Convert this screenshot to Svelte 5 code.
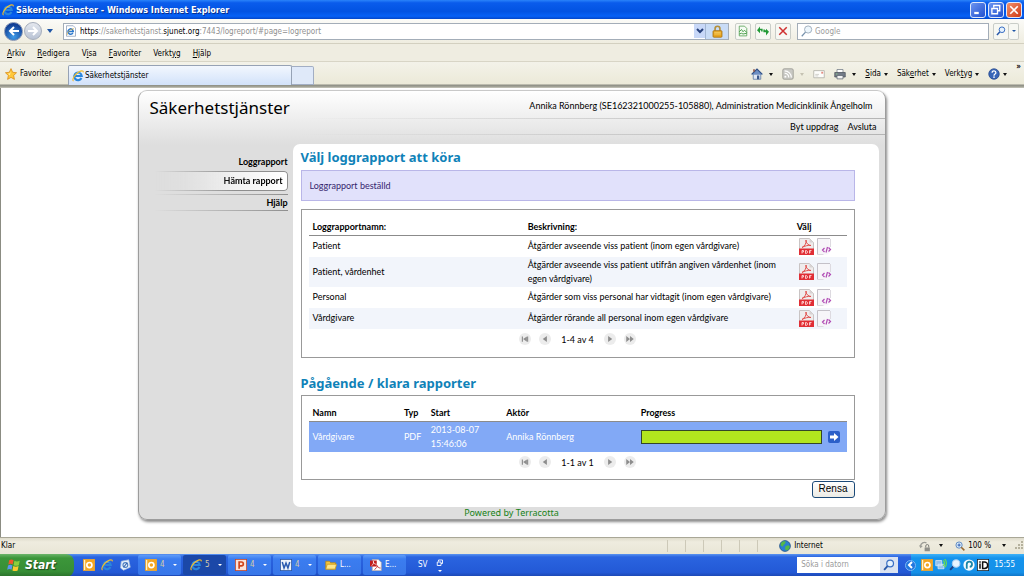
<script lang="ts">
  type Key = [before: string, key: string, after: string];

  const menus: Key[] = [
    ['', 'A', 'rkiv'],
    ['', 'R', 'edigera'],
    ['V', 'i', 'sa'],
    ['', 'F', 'avoriter'],
    ['Verkt', 'y', 'g'],
    ['', 'Hj', 'älp'],
  ];

  const commands: Key[] = [
    ['', 'S', 'ida'],
    ['Säk', 'e', 'rhet'],
    ['Verk', 't', 'yg'],
  ];

  const reports = [
    { name: 'Patient', description: 'Åtgärder avseende viss patient (inom egen vårdgivare)' },
    { name: 'Patient, vårdenhet', description: 'Åtgärder avseende viss patient utifrån angiven vårdenhet (inom egen vårdgivare)' },
    { name: 'Personal', description: 'Åtgärder som viss personal har vidtagit (inom egen vårdgivare)' },
    { name: 'Vårdgivare', description: 'Åtgärder rörande all personal inom egen vårdgivare' },
  ];

  const jobs = [
    { name: 'Vårdgivare', type: 'PDF', start: '2013-08-07 15:46:06', actor: 'Annika Rönnberg', progress: 100 },
  ];

  const tasks = [
    { icon: 'outlook', text: '4', group: true },
    { icon: 'ie', text: '5', group: true, active: true },
    { icon: 'powerpoint', text: '4', group: true },
    { icon: 'word', text: '4', group: true },
    { icon: 'folder', text: 'L...', group: false },
    { icon: 'acrobat', text: 'E...', group: false },
  ];

  let search = $state('');
  let desktopSearch = $state('');
</script>

{#snippet icon(name: string, size = 12)}
  <svg class="icon" width={size} height={size} viewBox="0 0 16 16" aria-hidden="true">
    {#if name === 'ie'}
      <path d="M12.6 10.6A5 5 0 1 1 13 8H4" fill="none" stroke="#2a86dc" stroke-width="2.8" />
      <path d="M4.5 6.2A4 4 0 0 1 10 4" fill="none" stroke="#9fd8ff" stroke-width="1" />
      <path d="M2 14.8C-.6 13 4 5.500 9 2.600C12 .8 15.400 .2 15 3.200" fill="none" stroke="#f2bd2c" stroke-width="1.500" />
    {:else if name === 'page'}
      <path d="M2 1h9l3 3v11H2z" fill="#fff" stroke="#8a9bb5" />
      <path d="M10.500 10.500A3.500 3.500 0 1 1 11 8.500H5" fill="none" stroke="#2c78cc" stroke-width="2" />
      <path d="M3 13C3 9 8 5 12 5" fill="none" stroke="#e3b33a" />
    {:else if name === 'star'}
      <path d="M8 .8l2.200 4.900 5.200.6-3.900 3.600 1.100 5.300L8 12.500l-4.600 2.700 1.100-5.300L.6 6.300l5.200-.6z" fill="#ffc83a" stroke="#d98a14" />
      <path d="M8 3.500L6.600 7 4 7.500l2.500 2z" fill="#fff0b0" />
    {:else if name === 'lock'}
      <path d="M5 7V4.500a3 3 0 0 1 6 0V7" fill="none" stroke="#b4903a" stroke-width="2" />
      <rect x="2.500" y="7" width="11" height="8" rx="1" fill="#e8a520" stroke="#a8700c" />
      <path d="M4 9h8M4 11h8" stroke="#f9d370" />
    {:else if name === 'compat'}
      <path d="M3 1.500h7l3 3v10H3z" fill="#f4fbf2" stroke="#4a9a4a" />
      <path d="M3 9l3-3 2 3 2-2 3 3M3 12l3-1 2 1 5-1" fill="none" stroke="#3c9840" stroke-width="1.200" />
    {:else if name === 'refresh'}
      <path d="M0 7l4-5v3h3.500v3.500h-2V7H4v4z" fill="#219a35" />
      <path d="M16 9l-4-4v2h-1.500V6h-2v3.500H12v4.500z" fill="#219a35" />
    {:else if name === 'stop'}
      <path d="M3 3l10 10M13 3L3 13" stroke="#cf3030" stroke-width="2" />
    {:else if name === 'magnifier'}
      <circle cx="9.500" cy="6" r="4.500" fill="#e6f2fd" stroke="#3a6fc4" stroke-width="1.600" />
      <path d="M6 9.500L1.500 14.500" stroke="#2757a8" stroke-width="2.400" />
    {:else if name === 'glass'}
      <circle cx="9.500" cy="6" r="4.800" fill="#edf6fc" stroke="#9aa9b8" stroke-width="1.200" />
      <path d="M6 9.500L1 15" stroke="#7590ab" stroke-width="1.600" />
    {:else if name === 'home'}
      <path d="M3 8h10v7H3z" fill="#dfe8f5" stroke="#54719c" />
      <path d="M.8 8.500L8 1.500l7.200 7" fill="#6d8fc4" stroke="#2f4f86" stroke-width="1.600" />
      <path d="M3 1.500h2V5H3z" fill="#8b4a3a" />
      <path d="M8 10h3v5H8z" fill="#39588c" />
    {:else if name === 'feed'}
      <rect x="1" y="1" width="14" height="14" rx="2" fill="#c9c9c4" stroke="#96968f" />
      <circle cx="4.500" cy="11.500" r="1.300" fill="#fff" />
      <path d="M3.500 7a5.500 5.500 0 0 1 5.500 5.500M3.500 3.800a9 9 0 0 1 9 9" fill="none" stroke="#fff" stroke-width="1.500" />
    {:else if name === 'mail'}
      <path d="M1 3.500h14v9.500H1z" fill="#fdfdfb" stroke="#aaa9a2" />
      <path d="M11 5h2.500v2.500H11z" fill="#e48c82" />
      <path d="M3 8.500h5M3 10.500h4" stroke="#c4c4be" />
    {:else if name === 'printer'}
      <path d="M4 2h8v5H4z" fill="#fff" stroke="#737b86" />
      <path d="M1 6h14v6H1z" fill="#747c88" stroke="#4e545e" />
      <path d="M4 10h8v4.500H4z" fill="#f4f4f4" stroke="#5d6570" />
      <path d="M2.500 8h2" stroke="#8fe08f" />
    {:else if name === 'help'}
      <circle cx="8" cy="8" r="7" fill="#3866b8" stroke="#24468a" />
      <path d="M5.500 6.200c0-3.400 5-3.200 5 0 0 2-2.500 1.800-2.500 4" fill="none" stroke="#fff" stroke-width="1.700" />
      <circle cx="8" cy="12.200" r="1.100" fill="#fff" />
    {:else if name === 'globe'}
      <circle cx="8" cy="8" r="7.200" fill="#2b7fd0" stroke="#1a4c86" />
      <path d="M3 3.500c2-2 5-2 6-1.500L8 5 6 6.500 5 9 2 7zM9 8l4-1 1.500 2-2 4L9 14l-1-3z" fill="#54b848" />
    {:else if name === 'protected'}
      <path d="M2 9c0-5 5-7 8-5" fill="none" stroke="#9d9d96" stroke-width="1.800" />
      <path d="M0 7l2 4 3-3z" fill="#9d9d96" />
      <path d="M9 10V8a2 2 0 0 1 4 0v2" fill="none" stroke="#7b7b76" stroke-width="1.300" />
      <rect x="7.500" y="10" width="7" height="5" fill="#8e8e88" />
    {:else if name === 'zoomin'}
      <circle cx="6.500" cy="6.500" r="5" fill="#dcecfb" stroke="#5b86bf" stroke-width="1.500" />
      <path d="M10 10l5 5" stroke="#9a6a32" stroke-width="2.500" />
      <path d="M6.500 4v5M4 6.500h5" stroke="#2458b0" stroke-width="1.500" />
    {:else if name === 'outlook'}
      <rect x=".5" y=".5" width="15" height="15" fill="#fff2c8" stroke="#e89a1c" />
      <path d="M3 1h12v14H3z" fill="#f4a620" />
      <circle cx="8.500" cy="8" r="3.400" fill="none" stroke="#fff" stroke-width="2.200" />
    {:else if name === 'desktop'}
      <path d="M3 3l10-2 2 10-9 4-4-3z" fill="#e8f1fb" stroke="#9db9dc" />
      <circle cx="8.500" cy="8" r="3.200" fill="none" stroke="#4b7fc4" stroke-width="1.500" />
      <path d="M6 11l5-6" stroke="#2d5fa8" stroke-width="1.500" />
    {:else if name === 'powerpoint'}
      <rect x=".5" y=".5" width="15" height="15" fill="#fbe3da" stroke="#c9431e" />
      <path d="M5.500 13V4h3a2.500 2.500 0 0 1 0 5.200h-3" fill="none" stroke="#d2431a" stroke-width="2.200" />
    {:else if name === 'word'}
      <rect x=".5" y=".5" width="15" height="15" fill="#eef4fc" stroke="#2a5298" />
      <path d="M3 4l2.400 8L8 5.500 10.600 12 13 4" fill="none" stroke="#2a5bb0" stroke-width="2" />
    {:else if name === 'folder'}
      <path d="M1 3h5l1.500 2H14v8.500H1z" fill="#f3c33c" stroke="#b98512" />
      <path d="M3 7h12.500L13.500 13.500H1z" fill="#fde58a" stroke="#c8961c" />
    {:else if name === 'acrobat'}
      <path d="M3 .5h8l4 4v11H3z" fill="#fff" stroke="#b3a5a5" />
      <path d="M0 2h9v8H0z" fill="#c21d1d" />
      <path d="M2 9c3-2 3-5 2.500-6 0 3 2 4 4 4" fill="none" stroke="#fff" />
      <path d="M6 14c3-2 4-4 4-5 0 2 2 3 4 3" fill="none" stroke="#c21d1d" stroke-width="1.200" />
    {:else if name === 'network'}
      <path d="M1 2h8v7H1zM4 7h8v6H4z" fill="#8fc0ee" stroke="#dbe9f7" />
      <path d="M11 2c2 2 2 5 0 7M13 0c3 3 3 8 0 11" fill="none" stroke="#6be04a" stroke-width="1.500" />
    {:else if name === 'lens'}
      <path d="M6 9.500L1.500 14.500" stroke="#1d3f86" stroke-width="2.600" />
      <circle cx="9.500" cy="6" r="5" fill="#e8f4ff" stroke="#a9cdf2" stroke-width="1.600" />
    {:else if name === 'swirl'}
      <circle cx="8" cy="8" r="7.500" fill="#f6fbff" />
      <path d="M5 13V7a3.500 3.500 0 1 1 4 3.500" fill="none" stroke="#1c86a8" stroke-width="2.400" />
    {:else if name === 'id'}
      <rect x=".5" y=".5" width="15" height="15" fill="#fff" stroke="#222" />
      <path d="M4 6v7M7.500 4H10a4 4 0 0 1 0 8.500H7.500z" fill="none" stroke="#111" stroke-width="2" />
      <path d="M3 3h2v2H3z" fill="#111" />
    {:else if name === 'restore'}
      <path d="M5 5V2h8v7h-3" fill="none" stroke="#fff" stroke-width="1.800" />
      <path d="M2.500 6h7.500v7H2.500z" fill="none" stroke="#fff" stroke-width="1.800" />
    {:else if name === 'minimize'}
      <path d="M3 12h6" stroke="#fff" stroke-width="3" />
    {:else if name === 'close'}
      <path d="M3 3l10 10M13 3L3 13" stroke="#fff" stroke-width="2.200" />
    {:else if name === 'first'}
      <path d="M4.500 4.500v7M11.500 4.500v7" stroke="#8d8d8d" stroke-width="1.500" />
      <path d="M10.500 4.500v7L5.500 8z" fill="#8d8d8d" />
    {:else if name === 'prev'}
      <path d="M10.500 4v8L5 8z" fill="#8d8d8d" />
    {:else if name === 'next'}
      <path d="M5.500 4v8L11 8z" fill="#8d8d8d" />
    {:else if name === 'last'}
      <path d="M3 4v8l5-4zM8 4v8l5-4z" fill="#8d8d8d" />
    {/if}
  </svg>
{/snippet}

{#snippet key([before, mnemonic, after]: Key)}{before}<u>{mnemonic}</u>{after}{/snippet}

{#snippet pager(label: string)}
  <div class="pager">
    <button aria-label="Första">{@render icon('first')}</button>
    <button aria-label="Föregående">{@render icon('prev')}</button>
    <span>{label}</span>
    <button aria-label="Nästa">{@render icon('next')}</button>
    <button aria-label="Sista">{@render icon('last')}</button>
  </div>
{/snippet}

<div class="window">
  <header class="titlebar">
    {@render icon('ie')}
    <span class="title">Säkerhetstjänster - Windows Internet Explorer</span>
    <div class="caption">
      <button aria-label="Minimera">{@render icon('minimize')}</button>
      <button aria-label="Återställ">{@render icon('restore')}</button>
      <button class="close" aria-label="Stäng">{@render icon('close')}</button>
    </div>
  </header>

  <div class="navbar">
    <div class="travel">
      <button class="back" aria-label="Bakåt">
        <svg class="icon" width="12" height="12" viewBox="0 0 12 12"><path d="M11 6H2M6 2L2 6l4 4" fill="none" stroke="#fff" stroke-width="2" /></svg>
      </button>
      <button class="forward" aria-label="Framåt">
        <svg class="icon" width="12" height="12" viewBox="0 0 12 12"><path d="M1 6h9M6 2l4 4-4 4" fill="none" stroke="#fff" stroke-width="2" /></svg>
      </button>
      <button class="recent" aria-label="Senaste sidor"><i class="caret navy"></i></button>
    </div>
    <div class="address">
      {@render icon('page')}
      <div class="url" role="textbox" tabindex="0" aria-label="Adress" contenteditable="true"><b>https</b>://sakerhetstjanst.<strong>sjunet.org</strong>:7443/logreport/#page=logreport</div>
      <button class="drop" aria-label="Visa adresser">
        <svg class="icon" width="8" height="8" viewBox="0 0 8 8"><path d="M1 2l3 3 3-3" fill="none" stroke="#28427c" stroke-width="2" /></svg>
      </button>
      <button class="secure" aria-label="Säkerhetsrapport">{@render icon('lock', 13)}</button>
    </div>
    <div class="tools">
      <button aria-label="Kompatibilitetsvy">{@render icon('compat')}</button>
      <button aria-label="Uppdatera">{@render icon('refresh')}</button>
      <button aria-label="Stoppa">{@render icon('stop')}</button>
    </div>
    <label class="search">
      {@render icon('glass')}
      <input type="text" placeholder="Google" aria-label="Sök" bind:value={search} />
    </label>
    <div class="go">
      <button aria-label="Sök">{@render icon('magnifier', 10)}</button>
      <button class="narrow" aria-label="Sökalternativ"><i class="caret small navy"></i></button>
    </div>
  </div>

  <nav class="menubar">
    {#each menus as menu}
      <button>{@render key(menu)}</button>
    {/each}
  </nav>

  <div class="tabrow">
    <button class="favorites">{@render icon('star')}Favoriter</button>
    <button class="tab">{@render icon('ie')}Säkerhetstjänster</button>
    <button class="newtab" aria-label="Ny flik"></button>
    <div class="commandbar">
      <button aria-label="Startsida">{@render icon('home')}<i class="caret"></i></button>
      <button aria-label="Feeds">{@render icon('feed')}<i class="caret pale"></i></button>
      <button aria-label="Läs e-post">{@render icon('mail')}</button>
      <button aria-label="Skriv ut">{@render icon('printer')}<i class="caret"></i></button>
      {#each commands as command}
        <button class="word"><span>{@render key(command)}</span><i class="caret"></i></button>
      {/each}
      <button class="word" aria-label="Hjälp">{@render icon('help')}<i class="caret"></i></button>
      <button class="more" aria-label="Mer">»</button>
    </div>
  </div>

  <main class="viewport">
    <div class="card">
      <div class="masthead">
        <h1>Säkerhetstjänster</h1>
        <div class="user">
          <p>Annika Rönnberg (SE162321000255-105880), Administration Medicinklinik Ångelholm</p>
          <div class="session">
            <a href="#uppdrag">Byt uppdrag</a>
            <a href="#avsluta">Avsluta</a>
          </div>
        </div>
      </div>

      <div class="body">
        <nav class="sidenav">
          <a href="#loggrapport">Loggrapport</a>
          <a class="current" href="#hamta">Hämta rapport</a>
          <a class="ruled" href="#hjalp">Hjälp</a>
        </nav>

        <section class="panel">
          <h2>Välj loggrapport att köra</h2>
          <div class="message" role="status">Loggrapport beställd</div>

          <div class="box">
            <table>
              <colgroup><col style="width:40%" /><col style="width:50%" /><col style="width:10%" /></colgroup>
              <thead>
                <tr><th>Loggrapportnamn:</th><th>Beskrivning:</th><th>Välj</th></tr>
              </thead>
              <tbody>
                {#each reports as report}
                  <tr>
                    <td>{report.name}</td>
                    <td>{report.description}</td>
                    <td>
                      <div class="formats">
                        <button aria-label="{report.name} som PDF">
                          <svg class="icon" width="15" height="17" viewBox="0 0 15 17">
                            <path d="M.5.5h10l4 4v12H.5z" fill="#efecec" stroke="#c9c4c4" />
                            <path d="M10.500.5v4h4z" fill="#d8d3d3" />
                            <path d="M3 9.500C6 8 7.500 5 7 2c-.3 3 2.500 5.500 5 5.500C9 7 5.500 8 3 9.500z" fill="none" stroke="#e2504c" />
                            <path d="M0 10.500h15V17H0z" fill="#e02e35" />
                            <path d="M3 15.500v-3h1.500v1.500H3M6.500 12.500v3h.8c1.500 0 1.500-3 0-3zM10.500 15.500v-3h2M10.500 14h1.500" fill="none" stroke="#ffd9d9" stroke-width=".9" />
                          </svg>
                        </button>
                        <button aria-label="{report.name} som XML">
                          <svg class="icon" width="15" height="17" viewBox="0 0 15 17">
                            <path d="M.5.5h12v5l1 8-3 3H.5z" fill="#f7f6f9" />
                            <path d="M.5 16.500V.5h12.500" fill="none" stroke="#c4c1c8" />
                            <path d="M.5 16.500h6M13.500 1v8" fill="none" stroke="#dddae0" />
                            <path d="M7.500 10L5.500 12l2 2M11.500 9.500l2 2-2 2M10.500 9L9 14.500" fill="none" stroke="#b04ab4" stroke-width="1.200" />
                          </svg>
                        </button>
                      </div>
                    </td>
                  </tr>
                {/each}
              </tbody>
            </table>
            {@render pager('1-4 av 4')}
          </div>

          <h2 class="second">Pågående / klara rapporter</h2>
          <div class="box short">
            <table class="jobs">
              <colgroup>
                <col style="width:17%" /><col style="width:5%" /><col style="width:14%" /><col style="width:25%" /><col style="width:39%" />
              </colgroup>
              <thead>
                <tr><th>Namn</th><th>Typ</th><th>Start</th><th>Aktör</th><th>Progress</th></tr>
              </thead>
              <tbody>
                {#each jobs as job}
                  <tr>
                    <td>{job.name}</td>
                    <td>{job.type}</td>
                    <td class="start">{job.start}</td>
                    <td>{job.actor}</td>
                    <td>
                      <div class="progress">
                        <div class="bar" role="progressbar" aria-label="Progress" aria-valuenow={job.progress}>
                          <div class="fill" style="width:{job.progress}%"></div>
                        </div>
                        <button aria-label="Öppna rapport">
                          <svg class="icon" width="12" height="12" viewBox="0 0 12 12">
                            <rect width="12" height="12" rx="2" fill="#2b5fc9" />
                            <path d="M2 4.500h4V2l4.500 4L6 10V7.500H2z" fill="#fff" />
                          </svg>
                        </button>
                      </div>
                    </td>
                  </tr>
                {/each}
              </tbody>
            </table>
            {@render pager('1-1 av 1')}
          </div>
          <div class="actions"><button>Rensa</button></div>
        </section>
      </div>

      <footer><a href="#terracotta">Powered by Terracotta</a></footer>
    </div>
  </main>

  <div class="statusbar">
    <span class="status">Klar</span>
    <div class="cells">
      {#each Array(6) as _}<i></i>{/each}
    </div>
    <div class="zone">{@render icon('globe')}Internet</div>
    <button aria-label="Skyddat läge">{@render icon('protected')}<i class="caret"></i></button>
    <button class="zoom">{@render icon('zoomin', 10)}<span>100 %</span><i class="caret"></i></button>
    <svg class="icon" width="9" height="9" viewBox="0 0 9 9"><path d="M7 1h2M4 4h2M7 4h2M1 7h2M4 7h2M7 7h2" stroke="#b5b19d" stroke-width="2" /></svg>
  </div>

  <div class="taskbar">
    <button class="startbutton">
      <svg class="icon" width="14" height="14" viewBox="0 0 16 16" aria-hidden="true">
        <path d="M2.500 2.500c2-1 3.500-.8 5 .2L6.500 7.500c-1.500-1-3-1.200-5-.2z" fill="#f0582a" />
        <path d="M8.500 3.200c2 1 3.500 1 6 0l-1 5c-2 1-4 1-6 0z" fill="#8ccf3c" />
        <path d="M1.200 8.500c2-1 3.500-.8 5 .2l-1 4.800c-1.500-1-3-1.200-5-.2z" fill="#5b95f0" />
        <path d="M7.200 9.200c2 1 3.500 1 6 0l-1 5c-2 1-4 1-6 0z" fill="#fbc92f" />
      </svg>
      Start
    </button>
    <div class="quick">
      <button aria-label="Outlook">{@render icon('outlook')}</button>
      <button aria-label="Internet Explorer">{@render icon('ie')}</button>
      <button aria-label="Visa skrivbordet">{@render icon('desktop')}</button>
    </div>
    <div class="tasks">
      {#each tasks as task}
        <button class:active={task.active}>
          {@render icon(task.icon)}
          <span class:count={task.group}>{task.text}</span>
          {#if task.group}<i class="caret small white"></i>{/if}
        </button>
      {/each}
    </div>
    <span class="language">SV</span>
    <div class="langtools">
      {@render icon('restore', 8)}
      <i class="caret small white"></i>
    </div>
    <div class="desksearch">
      <input type="text" placeholder="Söka i datorn" aria-label="Söka i datorn" bind:value={desktopSearch} />
      <button aria-label="Sök i datorn">{@render icon('magnifier')}</button>
    </div>
    <div class="tray">
      <button class="expand" aria-label="Visa dolda ikoner">
        <svg class="icon" width="10" height="10" viewBox="0 0 10 10"><path d="M6 2L3 5l3 3" fill="none" stroke="#fff" stroke-width="2" /></svg>
      </button>
      {@render icon('outlook')}
      {@render icon('network')}
      {@render icon('lens')}
      {@render icon('swirl')}
      {@render icon('id')}
      <time>15:55</time>
    </div>
  </div>
</div>

<style>
  :global(body) { margin: 0; }

  .window {
    --page: Lato, sans-serif;
    --heading: "Noto Sans", sans-serif;
    display: flex; flex-direction: column;
    min-height: 100vh;
    background: #fff; color: #000;
    font: 8px/12px "DejaVu Sans Condensed", "DejaVu Sans", sans-serif;
  }
  .window * { box-sizing: border-box; }
  button, input { font: inherit; color: inherit; margin: 0; padding: 0; border: 0; background: none; }
  button { display: flex; align-items: center; cursor: pointer; white-space: nowrap; }
  a { color: inherit; text-decoration: none; }
  p, h1, h2 { margin: 0; }
  .icon { display: block; flex: none; }

  .caret {
    width: 0; height: 0; flex: none;
    border: 2px solid transparent; border-top: 3px solid #111; border-bottom: 0;
  }
  .caret.small { border-top-width: 2px; }
  .caret.pale { border-top-color: #c5c2b2; }
  .caret.white { border-top-color: #fff; }
  .caret.navy { border-top-color: #1f55a5; }

  /* browser chrome */
  .titlebar {
    display: flex; align-items: center; gap: 2px;
    height: 19px; padding: 0 2px;
    background: linear-gradient(#2a83fa, #0a5cec 15%, #0253e2 60%, #0661f6 85%, #0346c8);
    color: #fff;
  }
  .title { flex: 1; font: bold 9px/14px "DejaVu Sans Condensed", sans-serif; text-shadow: 1px 1px #0a2f8c; }
  .caption { display: flex; gap: 2px; }
  .caption button {
    justify-content: center; width: 16px; height: 16px;
    border: 1px solid #dfe8fb; border-radius: 3px;
    background: linear-gradient(135deg, #6c94f0, #2050d0);
  }
  .caption .close { background: linear-gradient(135deg, #f0906c, #d03a14); }

  .navbar {
    display: flex; align-items: center; gap: 4px;
    height: 25px; padding: 0 5px 0 4px;
    background: linear-gradient(#fbfbf8, #efede0);
    border-bottom: 1px solid #d3d0c0;
  }
  .travel { display: flex; align-items: center; gap: 1px; width: 55px; }
  .travel button { justify-content: center; border-radius: 50%; }
  .back { width: 19px; height: 19px; background: radial-gradient(circle at 50% 80%, #3f9be8, #123f95 75%); border: 1px solid #8393b3; }
  .forward { width: 18px; height: 18px; background: linear-gradient(#e3e7ee, #b9c3d4); border: 1px solid #a5adbb; }
  .recent { width: 14px; height: 16px; }
  .recent .caret { border-width: 4px 3px 0; }
  .address {
    display: flex; align-items: center; flex: 1; height: 17px; padding-left: 1px;
    background: #fff; border: 1px solid #a3adb8;
  }
  .url { flex: 1; padding: 2px 0 0 3px; color: #8f8f8f; outline: 0; white-space: nowrap; }
  .url b, .url strong { font-weight: normal; color: #000; }
  .drop { justify-content: center; width: 11px; height: 14px; background: #c8d8f8; }
  .secure { justify-content: center; width: 23px; height: 15px; background: #c9dcf6; border-left: 1px solid #a3b7d3; }
  .tools { display: flex; gap: 4px; padding-left: 2px; }
  .tools button, .go button {
    justify-content: center; width: 16px; height: 17px;
    border: 1px solid #c9cdc8; border-radius: 2px; background: #f7f8f3;
  }
  .search {
    display: flex; align-items: center; gap: 2px; width: 192px; height: 17px; margin-left: 2px; padding-left: 3px;
    background: #fff; border: 1px solid #a3adb8;
  }
  .search input { flex: 1; min-width: 0; padding-top: 2px; outline: 0; }
  input::placeholder { color: #9b9b9b; opacity: 1; }
  .go { display: flex; }
  .go .narrow { width: 10px; border-left: 0; }

  .menubar {
    display: flex; gap: 12px; height: 18px; padding: 2px 0 0 7px;
    background: #efede1; border-bottom: 1px solid #d8d5c6;
  }

  .tabrow {
    display: flex; align-items: flex-end;
    height: 26px; padding: 0 3px 3px 5px;
    background: linear-gradient(#f3f2e9, #ecead9 21px, #ecead9 22px, #8b8c82 23px, #a8a89c 25px, #d0cfc4);
  }
  .favorites { gap: 3px; width: 63px; height: 22px; }
  .tab {
    gap: 1px; width: 224px; height: 20px; padding-left: 3px;
    border: 1px solid #96a2b5; border-bottom: 0; border-radius: 2px 2px 0 0;
    background: linear-gradient(#f2f7fe, #d2e2fa);
  }
  .newtab { width: 22px; height: 19px; border: 1px solid #a2aec4; border-left: 0; border-radius: 0 2px 0 0; background: #dfe9f9; }
  .commandbar { display: flex; flex: 1; align-items: center; justify-content: flex-end; gap: 9px; height: 22px; }
  .commandbar button { gap: 6px; }
  .commandbar .word { gap: 3px; }
  .commandbar .more { align-self: flex-start; height: 8px; font-weight: bold; }

  /* page */
  .viewport {
    flex: 1; padding: 2px 17px 17px 15px;
    font: 9px/13px var(--page);
    font-variant-ligatures: none;
    border-left: 1px solid #8b8c82;
  }
  .card {
    max-width: 748px; margin: 0 auto;
    border: 1px solid #9c9c9c; border-top-color: #c9c9c9; border-radius: 9px;
    background: linear-gradient(#fff, #dedede 54px);
    box-shadow: 1px 2px 3px #888;
  }
  .masthead { display: flex; }
  h1 { padding: 4px 11px; font: 17px/26px var(--heading); white-space: nowrap; }
  .user { flex: 1; text-align: right; white-space: nowrap; }
  .user p { padding: 8px 12px 6px 0; }
  .session {
    display: flex; justify-content: flex-end; gap: 9px; padding: 1px 8px 1px 0;
    border-top: 1px solid; border-bottom: 1px solid;
    border-image: linear-gradient(90deg, transparent, #b4b4b4) 1;
  }
  .body { display: flex; margin-top: 9px; padding-right: 6px; }
  .sidenav {
    display: flex; flex-direction: column; width: 154px; padding: 10px 5px 0 16px;
    font-weight: bold; line-height: 15px; text-align: right;
  }
  .sidenav .current {
    margin: 2px 0 3px; padding: 1px 4px 2px 0;
    border: 1px solid #8e8e8e; border-left: 0; border-radius: 0 4px 4px 0;
    background: linear-gradient(90deg, #dedede, #fff);
    mask-image: linear-gradient(90deg, transparent, #000 60%);
  }
  .sidenav .ruled {
    border-top: 1px solid; border-bottom: 1px solid;
    border-image: linear-gradient(90deg, transparent, #8e8e8e) 1;
  }
  .panel {
    flex: 1; min-width: 0; padding: 4px 24px 9px 8px;
    background: #fff; border-radius: 7px;
  }
  h2 { font: bold 13px/18px var(--heading); color: #0f82b8; }
  .second { margin-top: 16px; }
  .message {
    margin: 4px 0 8px; padding: 8px;
    background: #e1e1fb; border: 1px solid #b9b6e8; color: #35256e;
  }
  .box { padding: 9px 7px 7px; border: 1px solid #999; }
  .short { margin-top: 3px; padding-bottom: 6px; }
  table { width: 100%; border-collapse: collapse; table-layout: fixed; }
  th { padding: 0 4px; line-height: 16px; text-align: left; border-bottom: 1px solid #8b8b8b; white-space: nowrap; }
  td { height: 21px; padding: 1px 4px; line-height: 14px; }
  td:last-child { padding-top: 0; padding-bottom: 0; }
  tbody tr:nth-child(even) { background: #f2f5fb; }
  .formats { display: flex; gap: 3px; padding-left: 2px; }
  .jobs tbody tr { background: #82a9f6; color: #fff; }
  .jobs .start { padding-right: 20px; }
  .progress { display: flex; align-items: center; gap: 6px; padding-right: 3px; }
  .bar { flex: 1; height: 14px; border: 1px solid #33452a; background: #fff; }
  .fill { height: 100%; background: #b2e51e; }
  .pager { display: flex; align-items: center; justify-content: center; gap: 8px; height: 21px; }
  .pager button { border-radius: 50%; background: #ececec; }
  .pager span { padding: 0 2px; }
  .actions { display: flex; justify-content: flex-end; padding-top: 1px; }
  .actions button {
    justify-content: center; min-width: 43px; height: 17px;
    border: 1px solid #1c4a78; border-radius: 3px;
    background: linear-gradient(#fff, #ecebe5);
    font: 10px/14px "Liberation Sans", sans-serif;
  }
  footer { font: 9px/12px var(--heading); text-align: center; color: #178117; }

  /* status bar and taskbar */
  .statusbar {
    display: flex; align-items: center;
    height: 17px; padding: 0 1px;
    border-top: 1px solid #a9a797;
    background: linear-gradient(#dedbcb, #efecdf 4px, #e9e6d6);
  }
  .status { flex: 1; }
  .cells { display: flex; height: 12px; }
  .cells i { width: 18px; border-left: 1px solid #cdc9b8; }
  .zone { display: flex; align-items: center; gap: 3px; width: 144px; padding-left: 4px; }
  .statusbar button { gap: 8px; }
  .statusbar .zoom { gap: 3px; margin: 0 8px 0 12px; }
  .statusbar .zoom .caret { margin-left: 8px; }

  .taskbar {
    display: flex; align-items: center;
    height: 23px; color: #fff;
    background: linear-gradient(#5a93f0, #2a64e0 3px, #2359d6 80%, #1b45ad);
  }
  .startbutton {
    gap: 4px; width: 74px; height: 100%; padding-left: 7px;
    border-radius: 0 8px 8px 0;
    background: linear-gradient(#6cb56a, #3c963a 4px, #378e36 75%, #2a6f2a);
    font: italic bold 12px/18px "DejaVu Sans Condensed", sans-serif;
    text-shadow: 1px 1px 1px #1c451c;
  }
  .quick { display: flex; gap: 6px; width: 64px; padding-left: 9px; }
  .tasks { display: flex; gap: 2px; }
  .tasks button {
    gap: 3px; width: 43px; height: 20px; padding: 0 4px 0 7px;
    border-radius: 2px; background: linear-gradient(#5f9cf8, #3b7df0 4px, #3877e8);
  }
  .tasks .active { background: #1b48a8; }
  .tasks span { flex: 1; text-align: left; }
  .count { color: #d5cba8; }
  .language { padding-left: 12px; }
  .langtools { display: flex; flex-direction: column; align-items: center; gap: 3px; padding-left: 8px; }
  .desksearch { display: flex; width: 101px; height: 16px; margin-left: auto; background: #fff; }
  .desksearch input { flex: 1; min-width: 0; padding-left: 4px; color: #333; outline: 0; }
  .desksearch button { justify-content: center; width: 18px; background: #dbe3f1; }
  .tray {
    display: flex; align-items: center; gap: 2px;
    height: 100%; margin-left: 13px; padding-right: 9px;
    background: linear-gradient(#3fb2f8, #1593ec 4px, #1590e8 80%, #0f6fc0);
  }
  .expand { justify-content: center; width: 11px; height: 11px; margin-left: -6px; margin-right: 3px; border-radius: 50%; background: #2277de; border: 1px solid #7fb8f4; }
  time { padding-left: 3px; }
</style>
